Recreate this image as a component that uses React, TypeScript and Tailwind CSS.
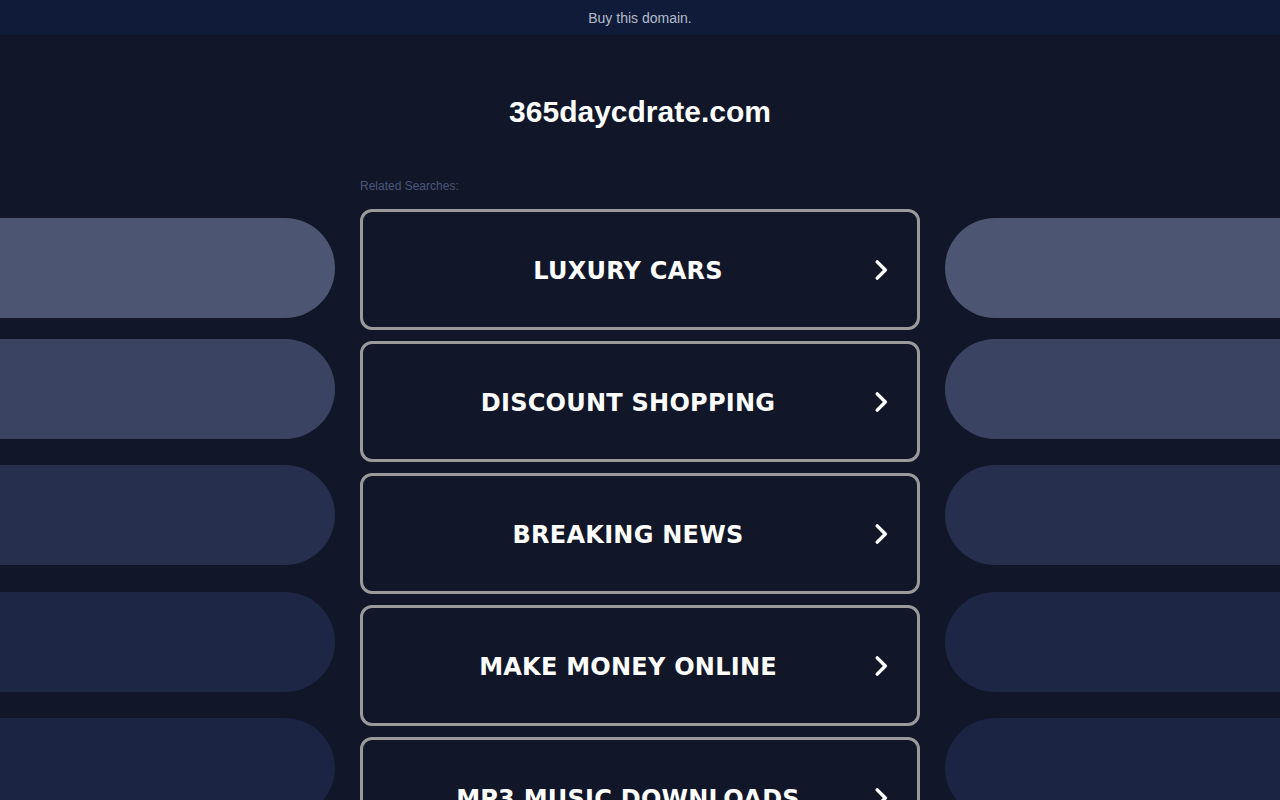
import React from 'react';

const searches = [
  'LUXURY CARS',
  'DISCOUNT SHOPPING',
  'BREAKING NEWS',
  'MAKE MONEY ONLINE',
  'MP3 MUSIC DOWNLOADS',
];

// decorative side pills, top margins tuned to the screenshot
const pills = [
  { color: 'bg-[#4c5673]', mt: 'mt-[183px]' },
  { color: 'bg-[#3a4361]', mt: 'mt-[21px]' },
  { color: 'bg-[#272f4f]', mt: 'mt-[26px]' },
  { color: 'bg-[#1d2645]', mt: 'mt-[27px]' },
  { color: 'bg-[#1b2443]', mt: 'mt-[26px]' },
];

const Chevron = () => (
  <svg width="26" height="26" viewBox="0 0 24 24" fill="none" stroke="#ffffff" strokeWidth="3.2" strokeLinecap="round" strokeLinejoin="round">
    <polyline points="8.5,4.5 16,12 8.5,19.5" />
  </svg>
);

export default function App() {
  return (
    <div className="relative h-[800px] w-[1280px] overflow-hidden bg-[#111729] font-['Liberation_Sans',Arial,sans-serif]">
      {/* Top bar */}
      <div className="flex h-[35px] items-center justify-center bg-[#0f1b38] pt-[2px] text-[14px] text-[#b3bccb]">
        Buy this domain.
      </div>

      <div className="flex">
        {/* Left pills */}
        <div className="flex w-[335px] shrink-0 flex-col">
          {pills.map((p, i) => (
            <div key={i} className={`h-[100px] w-full rounded-r-[50px] ${p.color} ${p.mt}`} />
          ))}
        </div>

        {/* Center column */}
        <div className="ml-[25px] w-[560px] shrink-0">
          <h1 className="mt-[60px] text-center text-[30px] font-bold leading-[34px] text-white">
            365daycdrate.com
          </h1>
          <div className="mt-[50px] text-[12px] leading-[14px] text-[#4b5679]">Related Searches:</div>
          <div className="mt-[16px] flex flex-col gap-[11px]">
            {searches.map((s) => (
              <div
                key={s}
                className="relative flex h-[121px] items-center justify-center rounded-[12px] border-[3px] border-[#9a9a9a] bg-[#111729]"
              >
                <span className="pr-[24px] pt-[2px] font-['DejaVu_Sans',Verdana,sans-serif] text-[24px] font-bold tracking-[0.25px] text-white">
                  {s}
                </span>
                <div className="absolute right-[23px] top-1/2 -translate-y-1/2">
                  <Chevron />
                </div>
              </div>
            ))}
          </div>
        </div>

        {/* Right pills */}
        <div className="ml-[25px] flex w-[335px] shrink-0 flex-col">
          {pills.map((p, i) => (
            <div key={i} className={`h-[100px] w-full rounded-l-[50px] ${p.color} ${p.mt}`} />
          ))}
        </div>
      </div>
    </div>
  );
}
